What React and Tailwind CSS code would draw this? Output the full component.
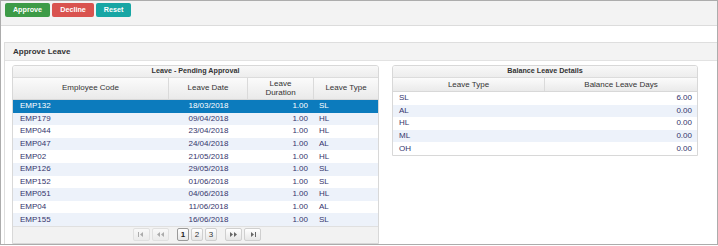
import React from "react";

const pending = [
  ["EMP132", "18/03/2018", "1.00", "SL"],
  ["EMP179", "09/04/2018", "1.00", "HL"],
  ["EMP044", "23/04/2018", "1.00", "HL"],
  ["EMP047", "24/04/2018", "1.00", "AL"],
  ["EMP02", "21/05/2018", "1.00", "HL"],
  ["EMP126", "29/05/2018", "1.00", "SL"],
  ["EMP152", "01/06/2018", "1.00", "SL"],
  ["EMP051", "04/06/2018", "1.00", "HL"],
  ["EMP04", "11/06/2018", "1.00", "AL"],
  ["EMP155", "16/06/2018", "1.00", "SL"],
];

const balance = [
  ["SL", "6.00"],
  ["AL", "0.00"],
  ["HL", "0.00"],
  ["ML", "0.00"],
  ["OH", "0.00"],
];

const cols = "grid grid-cols-[156px_79px_66px_1fr]";

function PagerBtn({ children, active, disabled, wide }) {
  return (
    <div
      className={`flex items-center justify-center h-[13px] rounded-[2px] border bg-gradient-to-b from-white to-[#e6e6e6] text-[8px] leading-none ${
        wide ? "w-[17px]" : "w-[12px]"
      } ${active ? "border-[#9a9a9a] text-[#222] font-bold" : "border-[#cfcfcf] text-[#333]"} ${
        disabled ? "opacity-50" : ""
      }`}
    >
      {children}
    </div>
  );
}

function Arrows({ dir, bar }) {
  const left = dir === "left";
  return (
    <svg width="9" height="5" viewBox="0 0 9 5" fill="#666">
      {left ? (
        bar ? (
          <>
            <rect x="1" y="0" width="1" height="5" />
            <path d="M6 0 L3 2.5 L6 5 Z" />
          </>
        ) : (
          <>
            <path d="M4 0 L1 2.5 L4 5 Z" />
            <path d="M8 0 L5 2.5 L8 5 Z" />
          </>
        )
      ) : bar ? (
        <>
          <path d="M3 0 L6 2.5 L3 5 Z" />
          <rect x="7" y="0" width="1" height="5" />
        </>
      ) : (
        <>
          <path d="M1 0 L4 2.5 L1 5 Z" />
          <path d="M5 0 L8 2.5 L5 5 Z" />
        </>
      )}
    </svg>
  );
}

export default function App() {
  return (
    <div className="w-[718px] h-[246px] bg-white font-['Liberation_Sans',Arial,sans-serif]">
      <div className="h-[245px] border border-[#acacac] flex flex-col overflow-hidden">
        {/* toolbar */}
        <div className="h-[25px] shrink-0 bg-[#f3f3f3] border-b border-[#dcdcdc] flex items-start gap-[2px] pl-[4px] pt-[2px]">
          <button className="h-[14px] w-[45px] rounded-[2px] bg-[#3d9b47] text-white text-[7.2px] font-bold leading-none">
            Approve
          </button>
          <button className="h-[14px] w-[42px] rounded-[2px] bg-[#d9534f] text-white text-[7.2px] font-bold leading-none">
            Decline
          </button>
          <button className="h-[14px] w-[35px] rounded-[2px] bg-[#17a6a4] text-white text-[7.2px] font-bold leading-none">
            Reset
          </button>
        </div>

        <div className="h-[16px] shrink-0 bg-white" />

        {/* section */}
        <div className="flex-1 ml-[3px] border-l border-t border-[#dedede] flex flex-col">
          <div className="h-[18px] shrink-0 bg-[#f3f3f3] border-b border-[#e2e2e2] flex items-center pl-[8px] text-[8px] font-bold text-[#333]">
            Approve Leave
          </div>

          <div className="flex items-start gap-[13px] pl-[7px] pt-[4px]">
            {/* pending approval */}
            <div className="w-[367px] border border-[#d8d8d8] rounded-t-[3px] overflow-hidden">
              <div className="h-[12px] bg-gradient-to-b from-[#f8f8f8] to-[#ededed] border-b border-[#dcdcdc] flex items-center justify-center text-[7.2px] font-bold text-[#333]">
                Leave - Pending Approval
              </div>
              <div className={`${cols} h-[22px] bg-gradient-to-b from-[#fbfbfb] to-[#eaeaea] border-b border-[#d8d8d8] text-[8px] text-[#333] leading-[8.5px]`}>
                <div className="flex items-center justify-center border-r border-[#dadada]">Employee Code</div>
                <div className="flex items-center justify-center border-r border-[#dadada]">Leave Date</div>
                <div className="flex items-center justify-center text-center border-r border-[#dadada]">
                  Leave
                  <br />
                  Duration
                </div>
                <div className="flex items-center justify-center">Leave Type</div>
              </div>
              {pending.map((r, i) => (
                <div
                  key={r[0]}
                  className={`${cols} h-[12.6px] items-center text-[8px] leading-none ${
                    i === 0
                      ? "bg-[#0c7bbd] text-white"
                      : i % 2 === 1
                      ? "bg-[#edf2fa] text-[#34346c]"
                      : "bg-white text-[#34346c]"
                  }`}
                >
                  <div className="pl-[7px]">{r[0]}</div>
                  <div className="text-center">{r[1]}</div>
                  <div className="text-right pr-[6px]">{r[2]}</div>
                  <div className="pl-[5px]">{r[3]}</div>
                </div>
              ))}
              <div className="h-[17px] bg-[#f2f2f2] border-t border-[#e0e0e0] flex items-center pl-[120px]">
                <div className="flex items-center gap-[2px]">
                  <PagerBtn wide disabled>
                    <Arrows dir="left" bar />
                  </PagerBtn>
                  <PagerBtn wide disabled>
                    <Arrows dir="left" />
                  </PagerBtn>
                  <div className="w-[4px]" />
                  <PagerBtn active>1</PagerBtn>
                  <PagerBtn>2</PagerBtn>
                  <PagerBtn>3</PagerBtn>
                  <div className="w-[4px]" />
                  <PagerBtn wide>
                    <Arrows dir="right" />
                  </PagerBtn>
                  <PagerBtn wide>
                    <Arrows dir="right" bar />
                  </PagerBtn>
                </div>
              </div>
            </div>

            {/* balance */}
            <div className="w-[306px] border border-[#d8d8d8] rounded-t-[3px] overflow-hidden">
              <div className="h-[12px] bg-gradient-to-b from-[#f8f8f8] to-[#ededed] border-b border-[#dcdcdc] flex items-center justify-center text-[7.2px] font-bold text-[#333]">
                Balance Leave Details
              </div>
              <div className="grid grid-cols-[152px_1fr] h-[14px] bg-gradient-to-b from-[#fbfbfb] to-[#eaeaea] border-b border-[#d8d8d8] text-[8px] text-[#333] leading-none">
                <div className="flex items-center justify-center border-r border-[#dadada]">Leave Type</div>
                <div className="flex items-center justify-center">Balance Leave Days</div>
              </div>
              {balance.map((r, i) => (
                <div
                  key={r[0]}
                  className={`grid grid-cols-[152px_1fr] h-[12.6px] items-center text-[8px] leading-none text-[#34346c] ${
                    i % 2 === 1 ? "bg-[#edf2fa]" : "bg-white"
                  }`}
                >
                  <div className="pl-[6px]">{r[0]}</div>
                  <div className="text-right pr-[5px]">{r[1]}</div>
                </div>
              ))}
            </div>
          </div>
        </div>
      </div>
    </div>
  );
}
